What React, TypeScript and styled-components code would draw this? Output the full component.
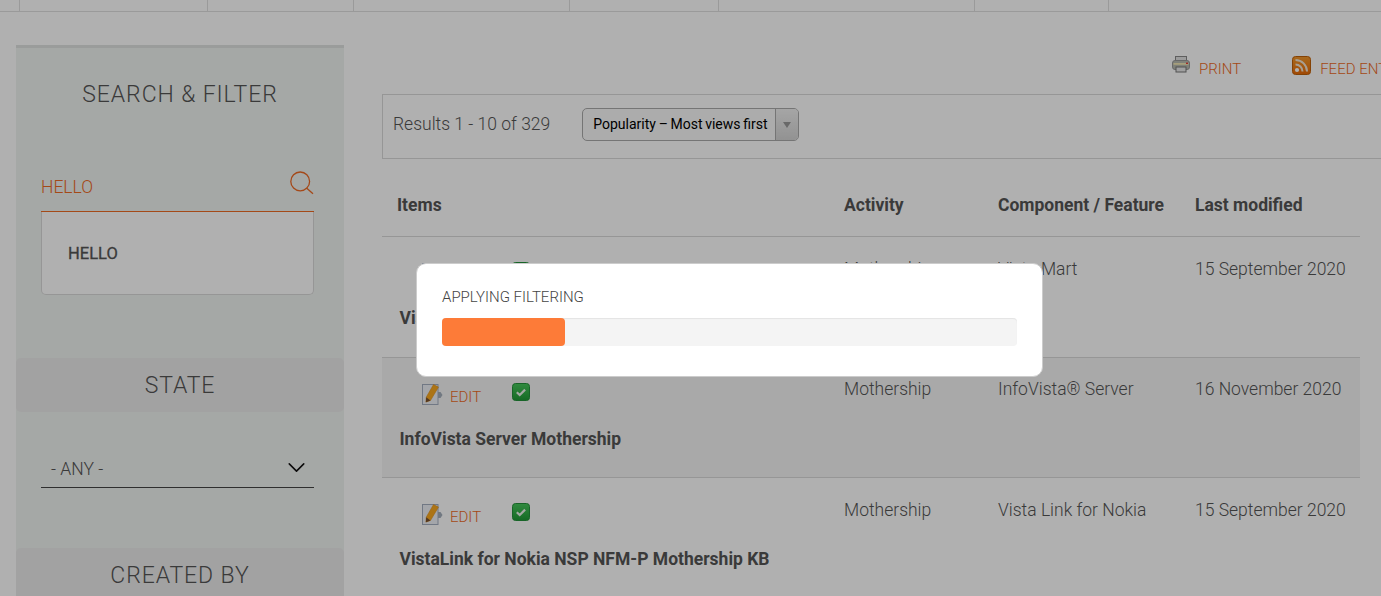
import styled, { createGlobalStyle } from "styled-components";
import { ChevronDown } from "lucide-react";

const GlobalStyle = createGlobalStyle`
  html, body {
    margin: 0;
    padding: 0;
    width: 100%;
    height: 100%;
    overflow: hidden;
    background: #fff;
    font-family: Roboto, "Liberation Sans", sans-serif;
    color: #555;
  }
`;

const topCells = [20, 188, 146, 216, 149, 256, 134];

const rows = [
  {
    title: "VistaMart Mothership",
    activity: "Mothership",
    component: "Vista Mart",
    modified: "15 September 2020",
    shaded: false,
  },
  {
    title: "InfoVista Server Mothership",
    activity: "Mothership",
    component: "InfoVista® Server",
    modified: "16 November 2020",
    shaded: true,
  },
  {
    title: "VistaLink for Nokia NSP NFM-P Mothership KB",
    activity: "Mothership",
    component: "Vista Link for Nokia",
    modified: "15 September 2020",
    shaded: false,
  },
];

function SearchIcon() {
  return (
    <svg width="24" height="24" viewBox="0 0 24 24" fill="none" stroke="#ee6a24" strokeWidth="1.3">
      <circle cx="10.2" cy="10.4" r="9.4" />
      <path d="M16.8 17.2l6.2 5.6" />
    </svg>
  );
}

function PrintIcon() {
  return (
    <svg width="18" height="17" viewBox="0 0 18 17">
      <rect x="3.5" y="0.5" width="11" height="6" fill="#e2e2e2" stroke="#888" />
      <rect x="0.5" y="4.5" width="17" height="9" rx="2.5" fill="#b8bcb0" stroke="#999" />
      <rect x="1.5" y="7" width="15" height="1.8" fill="#f2e6b4" />
      <rect x="14" y="6.6" width="2" height="1.4" fill="#e53935" />
      <rect x="4" y="11" width="10" height="5" fill="#e8e8e8" stroke="#777" />
    </svg>
  );
}

function FeedIcon() {
  return (
    <svg width="19" height="19" viewBox="0 0 19 19">
      <defs>
        <linearGradient id="feedFill" x1="0" y1="0" x2="0" y2="1">
          <stop offset="0" stopColor="#f59a2c" />
          <stop offset="1" stopColor="#e86a08" />
        </linearGradient>
      </defs>
      <rect x="0.5" y="0.5" width="18" height="18" rx="3" fill="url(#feedFill)" stroke="#c06008" />
      <circle cx="5" cy="14" r="2.1" fill="#fff" />
      <path d="M3.5 8.5a7 7 0 0 1 7 7" fill="none" stroke="#f4e6d4" strokeWidth="2" />
      <path d="M3.5 4a11.5 11.5 0 0 1 11.5 11.5" fill="none" stroke="#f4e6d4" strokeWidth="2" />
    </svg>
  );
}

function EditIcon() {
  return (
    <svg width="21" height="21" viewBox="0 0 21 21">
      <rect x="0.5" y="0.5" width="15.5" height="20" fill="#eef1f6" stroke="#a4aec0" />
      <path d="M16 8h2.5l2 3-2 3H16z" fill="#a4afbc" />
      <path d="M11.5 0.5l5 2.6-8 13.4-4.6 1.6 0.4-5z" fill="#f9a81f" stroke="#d88a18" strokeWidth="0.5" />
      <path d="M4.2 13.2l4.3 3.2-4.6 1.8z" fill="#7a5230" />
    </svg>
  );
}

function CheckIcon() {
  return (
    <svg width="18" height="18" viewBox="0 0 18 18">
      <defs>
        <linearGradient id="checkFill" x1="0" y1="0" x2="0" y2="1">
          <stop offset="0" stopColor="#48c95c" />
          <stop offset="1" stopColor="#1f9a36" />
        </linearGradient>
      </defs>
      <rect x="0.5" y="0.5" width="17" height="17" rx="3" fill="url(#checkFill)" stroke="#24923a" />
      <path d="M4.8 9.3l2.9 2.7 5.4-5.4" fill="none" stroke="#eef5ee" strokeWidth="2.2" />
    </svg>
  );
}

export default function App() {
  return (
    <>
      <GlobalStyle />
      <Page>
        <TopStrip>
          {topCells.map((w, i) => (
            <TopCell key={i} $width={w} />
          ))}
        </TopStrip>
        <Content>
          <Sidebar>
            <SideTitle>SEARCH &amp; FILTER</SideTitle>
            <SearchField>
              <SearchValue>HELLO</SearchValue>
              <SearchIcon />
            </SearchField>
            <TagBox>HELLO</TagBox>
            <Section>STATE</Section>
            <SelectField>
              <SelectValue>- ANY -</SelectValue>
              <ChevronDown size={29} strokeWidth={1.3} color="#111" />
            </SelectField>
            <Section>CREATED BY</Section>
          </Sidebar>
          <Main>
            <Actions>
              <ActionLink>
                <PrintIcon />
                <ActionText>PRINT</ActionText>
              </ActionLink>
              <ActionLink>
                <FeedIcon />
                <ActionText>FEED ENTRIES</ActionText>
              </ActionLink>
            </Actions>
            <Toolbar>
              <Results>Results 1 - 10 of 329</Results>
              <SortSelect>
                <SortLabel>Popularity – Most views first</SortLabel>
                <SortArrow>
                  <ArrowGlyph />
                </SortArrow>
              </SortSelect>
            </Toolbar>
            <Table>
              <HeadRow>
                <HeadCell>Items</HeadCell>
                <HeadCell>Activity</HeadCell>
                <HeadCell>Component / Feature</HeadCell>
                <HeadCell>Last modified</HeadCell>
              </HeadRow>
              {rows.map((r) => (
                <Row key={r.title} $shaded={r.shaded}>
                  <ItemCell>
                    <ItemTools>
                      <EditLink>
                        <EditIcon />
                        <EditText>EDIT</EditText>
                      </EditLink>
                      <CheckIcon />
                    </ItemTools>
                    <ItemTitle>{r.title}</ItemTitle>
                  </ItemCell>
                  <Cell>{r.activity}</Cell>
                  <Cell>{r.component}</Cell>
                  <Cell>{r.modified}</Cell>
                </Row>
              ))}
            </Table>
          </Main>
        </Content>
        <Overlay>
          <Dialog>
            <DialogLabel>APPLYING FILTERING</DialogLabel>
            <Track>
              <Fill />
            </Track>
          </Dialog>
        </Overlay>
      </Page>
    </>
  );
}

const Page = styled.div`
  width: 1381px;
  height: 596px;
  overflow: hidden;
`;

const TopStrip = styled.div`
  display: flex;
  height: 11px;
  border-bottom: 1px solid #e0e0e0;
`;

const TopCell = styled.div<{ $width: number }>`
  width: ${(p) => p.$width}px;
  box-sizing: border-box;
  border-right: 1px solid #e0e0e0;
`;

const Content = styled.div`
  display: flex;
  padding: 33px 0 0 16px;
`;

const Sidebar = styled.aside`
  flex: none;
  width: 328px;
  height: 600px;
  box-sizing: border-box;
  background: #f0f3f1;
  border-top: 3px solid #dfe3e1;
`;

const SideTitle = styled.h2`
  margin: 32px 0 0;
  font-size: 23px;
  line-height: 30px;
  font-weight: 300;
  letter-spacing: 0.9px;
  text-align: center;
  color: #555;
`;

const SearchField = styled.div`
  display: flex;
  justify-content: space-between;
  align-items: flex-start;
  box-sizing: border-box;
  width: 273px;
  height: 44px;
  margin: 58px 0 0 25px;
  border-bottom: 1px solid #ee6a24;
  padding-top: 3px;
`;

const SearchValue = styled.span`
  margin-top: 4px;
  font-size: 17.5px;
  line-height: 24px;
  font-weight: 300;
  color: #ee6a24;
`;

const TagBox = styled.div`
  box-sizing: border-box;
  width: 273px;
  height: 83px;
  margin-left: 25px;
  padding-left: 26px;
  border: 1px solid #dadada;
  border-top: 0;
  border-radius: 0 0 5px 5px;
  background: #fff;
  font-size: 16.5px;
  font-weight: 400;
  -webkit-text-stroke: 0.3px #555;
  line-height: 83px;
  color: #555;
`;

const Section = styled.div`
  height: 54px;
  margin-top: 63px;
  border-radius: 5px;
  background: #ebebeb;
  font-size: 23px;
  font-weight: 300;
  letter-spacing: 0.9px;
  line-height: 56px;
  text-align: center;
  color: #555;

  & + div {
    margin-top: 36px;
  }
`;

const SelectField = styled.div`
  display: flex;
  justify-content: space-between;
  align-items: center;
  box-sizing: border-box;
  width: 273px;
  height: 40px;
  margin-left: 25px;
  padding: 0 3px 0 10px;
  border-bottom: 1px solid #444;

  & + div {
    margin-top: 60px;
  }
`;

const SelectValue = styled.span`
  padding-top: 2px;
  font-size: 17.5px;
  font-weight: 300;
  color: #555;
`;

const Main = styled.main`
  flex: none;
  width: 1100px;
  margin-left: 38px;
`;

const Actions = styled.div`
  display: flex;
  gap: 51px;
  height: 49px;
  padding: 11px 0 0 790px;
  box-sizing: border-box;
`;

const ActionLink = styled.a`
  display: flex;
  align-items: flex-start;
  gap: 9px;
  white-space: nowrap;
`;

const ActionText = styled.span`
  margin-top: 4px;
  font-size: 15px;
  line-height: 18px;
  font-weight: 300;
  color: #ee6a24;
`;

const Toolbar = styled.div`
  display: flex;
  align-items: center;
  gap: 32px;
  box-sizing: border-box;
  height: 65px;
  padding: 0 0 4px 10px;
  border: 1px solid #dadada;
`;

const Results = styled.span`
  margin-bottom: 2px;
  font-size: 17.5px;
  font-weight: 300;
  color: #555;
`;

const SortSelect = styled.div`
  display: flex;
  width: 217px;
  height: 33px;
  box-sizing: border-box;
  border: 1px solid #aaa;
  border-radius: 5px;
  background: #f9f9f9;
`;

const SortLabel = styled.span`
  flex: 1;
  padding-left: 10px;
  font-size: 14px;
  word-spacing: -0.8px;
  line-height: 31px;
  color: #000;
  white-space: nowrap;
`;

const SortArrow = styled.span`
  display: flex;
  align-items: center;
  justify-content: center;
  width: 22px;
  border-left: 1px solid #aaa;
  background: linear-gradient(#f0f0f0, #d4d4d4);
  border-radius: 0 4px 4px 0;
`;

const ArrowGlyph = styled.i`
  width: 0;
  height: 0;
  border-left: 4px solid transparent;
  border-right: 4px solid transparent;
  border-top: 6px solid #999;
`;

const Table = styled.div`
  width: 978px;
`;

const HeadRow = styled.div`
  display: grid;
  grid-template-columns: 447px 154px 197px 180px;
  box-sizing: border-box;
  height: 78px;
  border-bottom: 1px solid #dadada;
  padding-top: 21px;
`;

const HeadCell = styled.div`
  padding-left: 15px;
  font-size: 17.5px;
  line-height: 50px;
  font-weight: 700;
  color: #555;
`;

const Row = styled.div<{ $shaded: boolean }>`
  display: grid;
  grid-template-columns: 447px 154px 197px 180px;
  box-sizing: border-box;
  height: 120.5px;
  border-bottom: 1px solid #dadada;
  background: ${(p) => (p.$shaded ? "#f5f5f5" : "#fff")};
`;

const Cell = styled.div`
  padding: 20.5px 0 0 15px;
  font-size: 17.5px;
  line-height: 22px;
  font-weight: 300;
  color: #555;
`;

const ItemCell = styled.div`
  padding: 25px 0 0 17.5px;
`;

const ItemTools = styled.div`
  display: flex;
  align-items: flex-start;
  gap: 31px;
  padding-left: 22.5px;
`;

const EditLink = styled.a`
  display: flex;
  align-items: center;
  gap: 7px;
`;

const EditText = styled.span`
  padding-top: 5px;
  font-size: 15px;
  font-weight: 300;
  color: #ee6a24;
`;

const ItemTitle = styled.div`
  margin-top: 21px;
  font-size: 17.5px;
  line-height: 24px;
  font-weight: 700;
  color: #555;
`;

const Overlay = styled.div`
  position: fixed;
  inset: 0;
  background: rgba(0, 0, 0, 0.31);
`;

const Dialog = styled.div`
  position: absolute;
  left: 416px;
  top: 263px;
  width: 627px;
  height: 114px;
  box-sizing: border-box;
  padding: 24px 25px 0;
  background: #fff;
  border: 1px solid #ccc;
  border-radius: 10px;
`;

const DialogLabel = styled.div`
  font-size: 15px;
  line-height: 18px;
  font-weight: 300;
  color: #444;
`;

const Track = styled.div`
  height: 28px;
  margin-top: 12px;
  border-radius: 4px;
  background: #f4f4f4;
  box-shadow: inset 0 1px 1px #e4e4e4;
`;

const Fill = styled.div`
  width: 123px;
  height: 28px;
  border-radius: 4px;
  background: #fd7b38;
`;
